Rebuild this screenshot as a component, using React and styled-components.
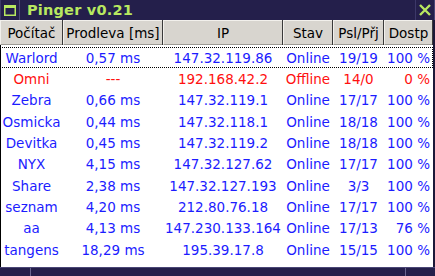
import React from 'react';
import styled, { createGlobalStyle } from 'styled-components';

const GlobalStyle = createGlobalStyle`
  html, body {
    margin: 0;
    padding: 0;
    background: #241f4b;
  }
  body {
    font-family: "DejaVu Sans", Verdana, sans-serif;
  }
`;

const hosts = [
  { name: 'Warlord', delay: '0,57 ms', ip: '147.32.119.86', state: 'Online', ratio: '19/19', avail: '100 %' },
  { name: 'Omni', delay: '---', ip: '192.168.42.2', state: 'Offline', ratio: '14/0', avail: '0 %', down: true },
  { name: 'Zebra', delay: '0,66 ms', ip: '147.32.119.1', state: 'Online', ratio: '17/17', avail: '100 %' },
  { name: 'Osmicka', delay: '0,44 ms', ip: '147.32.118.1', state: 'Online', ratio: '18/18', avail: '100 %' },
  { name: 'Devitka', delay: '0,45 ms', ip: '147.32.119.2', state: 'Online', ratio: '18/18', avail: '100 %' },
  { name: 'NYX', delay: '4,15 ms', ip: '147.32.127.62', state: 'Online', ratio: '17/17', avail: '100 %' },
  { name: 'Share', delay: '2,38 ms', ip: '147.32.127.193', state: 'Online', ratio: '3/3', avail: '100 %' },
  { name: 'seznam', delay: '4,20 ms', ip: '212.80.76.18', state: 'Online', ratio: '17/17', avail: '100 %' },
  { name: 'aa', delay: '4,13 ms', ip: '147.230.133.164', state: 'Online', ratio: '17/13', avail: '76 %' },
  { name: 'tangens', delay: '18,29 ms', ip: '195.39.17.8', state: 'Online', ratio: '15/15', avail: '100 %' },
];

const columns = '63px 100px 120px 50px 51px 49px';

const Window = styled.div`
  width: 435px;
  height: 276px;
  display: flex;
  flex-direction: column;
  background: #241f4b;
  overflow: hidden;
`;

const TitleBar = styled.div`
  height: 20px;
  display: flex;
  align-items: stretch;
  background: #241f4b;
`;

const TitleButton = styled.div`
  width: 20px;
  display: flex;
  align-items: center;
  justify-content: center;
  border-left: 1px solid #3c3868;
  border-right: 1px solid #4a4676;
  box-sizing: border-box;
  ${({ $right }) => $right && 'margin-left: auto;'}
`;

const Title = styled.div`
  padding-left: 7px;
  display: flex;
  align-items: center;
  color: #b8e860;
  font-weight: bold;
  font-size: 14.5px;
  letter-spacing: 0.2px;
`;

const Table = styled.div`
  flex: 1;
  display: flex;
  flex-direction: column;
  background: #ffffff;
  border-left: 1px solid #000;
  border-right: 2px solid #1c1838;
  box-sizing: border-box;
`;

const HeaderRow = styled.div`
  height: 25px;
  display: grid;
  grid-template-columns: ${columns};
  background: #3a3a3a;
  margin-left: -1px;
`;

const HeaderCell = styled.div`
  background: #d8d5cf;
  border-top: 1px solid #f2f0ec;
  border-left: 1px solid #f2f0ec;
  border-bottom: 1px solid #9c9a94;
  margin-right: 1px;
  display: flex;
  align-items: center;
  justify-content: center;
  font-size: 13.5px;
  color: #000;
  box-sizing: border-box;
  white-space: nowrap;
`;

const Body = styled.div`
  flex: 1;
  padding-top: 2px;
`;

const Row = styled.div`
  height: 21.33px;
  display: grid;
  grid-template-columns: ${columns};
  margin-left: -1px;
  box-sizing: border-box;
  outline: ${({ $focused }) => ($focused ? '1px dotted #000' : 'none')};
  outline-offset: -1px;
  color: ${({ $down }) => ($down ? '#ff1010' : '#1c1cff')};
  font-size: 13.5px;
`;

const Cell = styled.div`
  display: flex;
  align-items: center;
  justify-content: ${({ $align }) => ($align === 'right' ? 'flex-end' : 'center')};
  padding-right: ${({ $align }) => ($align === 'right' ? '3px' : '0')};
  white-space: nowrap;
`;

const BottomFrame = styled.div`
  height: 9px;
  display: flex;
  background: #241f4b;
  border-top: 1px solid #4a4676;
  box-sizing: border-box;
`;

const FrameSegment = styled.div`
  width: ${({ $w }) => $w};
  flex: ${({ $grow }) => ($grow ? 1 : 'none')};
  border-right: ${({ $sep }) => ($sep ? '1px solid #6a6690' : 'none')};
`;

const WindowIcon = () => (
  <svg width="12" height="11" viewBox="0 0 12 11">
    <rect x="0.75" y="0.75" width="10.5" height="9.5" fill="none" stroke="#b8e860" strokeWidth="1.5" />
    <rect x="0" y="0" width="12" height="3" fill="#b8e860" />
  </svg>
);

const CloseIcon = () => (
  <svg width="12" height="12" viewBox="0 0 12 12">
    <path d="M1 1 L11 11 M11 1 L1 11" stroke="#b8e860" strokeWidth="2.4" />
  </svg>
);

export default function App() {
  return (
    <>
      <GlobalStyle />
      <Window>
        <TitleBar>
          <TitleButton>
            <WindowIcon />
          </TitleButton>
          <Title>Pinger v0.21</Title>
          <TitleButton $right>
            <CloseIcon />
          </TitleButton>
        </TitleBar>
        <Table>
          <HeaderRow>
            <HeaderCell>Počítač</HeaderCell>
            <HeaderCell>Prodleva [ms]</HeaderCell>
            <HeaderCell>IP</HeaderCell>
            <HeaderCell>Stav</HeaderCell>
            <HeaderCell>Psl/Přj</HeaderCell>
            <HeaderCell>Dostp</HeaderCell>
          </HeaderRow>
          <Body>
            {hosts.map((h, i) => (
              <Row key={h.name} $focused={i === 0} $down={h.down}>
                <Cell>{h.name}</Cell>
                <Cell>{h.delay}</Cell>
                <Cell>{h.ip}</Cell>
                <Cell>{h.state}</Cell>
                <Cell>{h.ratio}</Cell>
                <Cell $align="right">{h.avail}</Cell>
              </Row>
            ))}
          </Body>
        </Table>
        <BottomFrame>
          <FrameSegment $w="30px" $sep />
          <FrameSegment $grow $sep />
          <FrameSegment $w="29px" />
        </BottomFrame>
      </Window>
    </>
  );
}
